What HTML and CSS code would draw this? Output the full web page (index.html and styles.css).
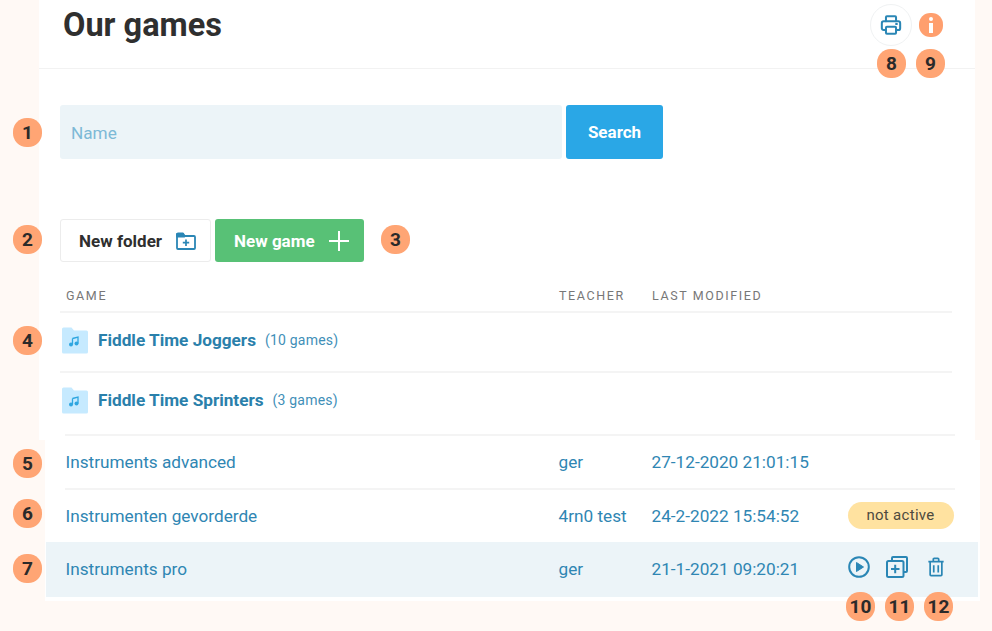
FILE: index.html
```html
<!DOCTYPE html>
<html lang="en">
<head>
<meta charset="utf-8">
<title>Our games</title>
<link rel="stylesheet" href="styles.css">
</head>
<body>
<div class="page">
  <section class="panel">
    <header class="head">
      <h1>Our games</h1>
      <div class="head-actions">
        <button class="print" aria-label="Print">
          <svg width="22" height="22" viewBox="0 0 24 24" fill="none" stroke="#2a86b5" stroke-width="2.200" stroke-linejoin="round" stroke-linecap="round"><path d="M6.500 8V3.500a1 1 0 0 1 1-1h9a1 1 0 0 1 1 1V8"/><path d="M6.500 17.500H4a2 2 0 0 1-2-2V10a2 2 0 0 1 2-2h16a2 2 0 0 1 2 2v5.500a2 2 0 0 1-2 2h-2.500"/><rect x="6.500" y="14" width="11" height="7.500" rx="1"/><path d="M17.500 11h1"/></svg>
        </button>
        <span class="info" aria-label="Info"><i></i><b></b></span>
      </div>
      <span class="tag tag-8">8</span>
      <span class="tag tag-9">9</span>
    </header>

    <form class="search">
      <input type="text" placeholder="Name">
      <button type="button">Search</button>
      <span class="tag tag-1">1</span>
    </form>

    <div class="tools">
      <button class="btn-folder" type="button">New folder
        <svg width="22" height="20" viewBox="0 0 22 20" fill="none" stroke="#2a86b5" stroke-width="1.800" stroke-linejoin="round"><path d="M2 3.500a1 1 0 0 1 1-1h5l1.500 2.500H19a1 1 0 0 1 1 1V17a1 1 0 0 1-1 1H3a1 1 0 0 1-1-1z"/><path d="M2 3h6l1.500 2.500H2z" fill="#2a86b5"/><path d="M11 8.500v6.500M7.800 11.700h6.400" stroke-width="1.700"/></svg>
      </button>
      <button class="btn-game" type="button">New game
        <svg width="22" height="22" viewBox="0 0 22 22" fill="none" stroke="#fff" stroke-width="2"><path d="M11 1v20M1 11h20"/></svg>
      </button>
      <span class="tag tag-2">2</span>
      <span class="tag tag-3">3</span>
    </div>

    <div class="table-head">
      <span>GAME</span><span>TEACHER</span><span>LAST MODIFIED</span>
    </div>

    <div class="folder">
      <svg class="folder-icon" width="28" height="28" viewBox="0 0 28 28"><path d="M1 3a1.500 1.500 0 0 1 1.500-1.500h8L13 4.500h12.500A1.500 1.500 0 0 1 27 6v20a1.500 1.500 0 0 1-1.500 1.500h-23A1.500 1.500 0 0 1 1 26z" fill="#c6eaff"/><path d="M11.500 12.500l5.500-1.500v6.500M11.500 12.500V18.500" fill="none" stroke="#2ea6e0" stroke-width="1.300"/><circle cx="10" cy="18.500" r="2" fill="#2ea6e0"/><circle cx="15.500" cy="17.500" r="2" fill="#2ea6e0"/></svg>
      <a class="folder-name">Fiddle Time Joggers</a><span class="count">(10 games)</span>
      <span class="tag tag-4">4</span>
    </div>
    <div class="folder folder-last">
      <svg class="folder-icon" width="28" height="28" viewBox="0 0 28 28"><path d="M1 3a1.500 1.500 0 0 1 1.500-1.500h8L13 4.500h12.500A1.500 1.500 0 0 1 27 6v20a1.500 1.500 0 0 1-1.500 1.500h-23A1.500 1.500 0 0 1 1 26z" fill="#c6eaff"/><path d="M11.500 12.500l5.500-1.500v6.500M11.500 12.500V18.500" fill="none" stroke="#2ea6e0" stroke-width="1.300"/><circle cx="10" cy="18.500" r="2" fill="#2ea6e0"/><circle cx="15.500" cy="17.500" r="2" fill="#2ea6e0"/></svg>
      <a class="folder-name">Fiddle Time Sprinters</a><span class="count">(3 games)</span>
    </div>
    <div class="divider"></div>
  </section>

  <section class="lower">
    <div class="row row-first">
      <span>Instruments advanced</span><span>ger</span><span>27-12-2020 21:01:15</span><span></span>
      <span class="tag tag-5">5</span>
    </div>
    <div class="row row-plain">
      <span>Instrumenten gevorderde</span><span>4rn0 test</span><span>24-2-2022 15:54:52</span><span class="pill">not active</span>
      <span class="tag tag-6">6</span>
    </div>
    <div class="row row-hover">
      <span>Instruments pro</span><span>ger</span><span>21-1-2021 09:20:21</span>
      <span class="actions">
        <svg width="24" height="24" viewBox="0 0 24 24" fill="none" stroke="#2a86b5" stroke-width="2"><circle cx="12" cy="12" r="9.800"/><path d="M9.500 7.500v9l7-4.500z" fill="#2a86b5" stroke-width="1" stroke-linejoin="round"/></svg>
        <svg width="24" height="24" viewBox="0 0 24 24" fill="none" stroke="#2a86b5" stroke-width="2" stroke-linejoin="round"><path d="M7 5V3a1 1 0 0 1 1-1h13a1 1 0 0 1 1 1v13a1 1 0 0 1-1 1h-2"/><rect x="2" y="6" width="16.500" height="16" rx="1.500"/><path d="M10.200 9.800v8.400M6 14h8.500"/></svg>
        <svg class="trash" width="18" height="20" viewBox="0 0 20 22" fill="none" stroke="#2a86b5" stroke-width="1.900" stroke-linejoin="round"><path d="M1.500 5h17M7 5V2.500a1 1 0 0 1 1-1h4a1 1 0 0 1 1 1V5"/><path d="M3.500 5v14.500a1 1 0 0 0 1 1h11a1 1 0 0 0 1-1V5"/><path d="M7.500 9v8M12.500 9v8"/></svg>
      </span>
      <span class="tag tag-7">7</span>
      <span class="tag tag-10">10</span>
      <span class="tag tag-11">11</span>
      <span class="tag tag-12">12</span>
    </div>
  </section>
</div>
</body>
</html>
```
FILE: styles.css
```css
* { box-sizing: border-box; }
html, body { margin: 0; padding: 0; height: 631px; overflow: hidden; }
body { background: #fff9f5; font-family: Roboto, "Liberation Sans", sans-serif; color: #2f2f2f; }
.page { width: 992px; height: 631px; position: relative; }
button { font-family: inherit; cursor: pointer; }

.panel { margin-left: 39px; width: 936px; height: 440px; background: #fff; padding-left: 21px; padding-right: 23px; }
.head { height: 69px; margin: 0 -23px 0 -21px; padding: 0 33px 0 24px; border-bottom: 1px solid #f2f2f2; display: flex; align-items: flex-start; justify-content: space-between; }
.head h1 { margin: 7px 0 0; font-size: 32.500px; line-height: 36px; font-weight: 700; color: #2f2f2f; }
.head-actions { display: flex; align-items: center; gap: 7px; margin-top: 4px; }
.print { width: 42px; height: 42px; border-radius: 50%; border: 1px solid #f0f2f3; background: #fff; padding: 0; display: flex; align-items: center; justify-content: center; }
.info { width: 24px; height: 24px; border-radius: 47%; background: #ff9f6e; margin-right: -1px; display: flex; flex-direction: column; align-items: center; justify-content: center; gap: 2px; }
.info i { width: 4px; height: 4px; border-radius: 50%; background: #fff; }
.info b { width: 3.500px; height: 10px; background: #fff; }

.search { margin-top: 36px; display: flex; gap: 4px; height: 54px; }
.search input { width: 502px; height: 54px; border: 0; border-radius: 3px; background: #ecf4f8; padding: 1px 11px 0; font: 400 17.200px Roboto, sans-serif; outline: none; }
.search input::placeholder { color: #7db9d6; opacity: 1; }
.search button { width: 97px; border: 0; border-radius: 3px; background: #2aa7e6; color: #fff; font-size: 17px; font-weight: 700; padding: 0; }

.tools { margin-top: 60px; display: flex; gap: 4px; height: 43px; }
.tools button { height: 43px; display: flex; align-items: center; border-radius: 3px; font-size: 17px; font-weight: 700; padding: 0; }
.btn-folder { width: 151px; border: 1px solid #ececec; background: #fff; color: #2f2f2f; justify-content: flex-start; padding-left: 18px !important; gap: 13px; }
.btn-game { width: 149px; border: 0; background: #58c176; color: #fff; padding-left: 19px !important; gap: 13px; }

.table-head { margin-top: 20px; height: 31px; padding-left: 6px; border-bottom: 2px solid #f4f4f4; display: grid; grid-template-columns: 493px 93px 1fr; align-items: start; font-size: 12.500px; letter-spacing: 1.600px; color: #777; line-height: 16px; padding-top: 6px; }

.folder { height: 60px; padding-bottom: 5px; border-bottom: 2px solid #f4f4f4; display: flex; align-items: center; }
.folder-last { border-bottom: 0; height: 61px; padding-bottom: 8px; }
.folder-icon { margin-left: 1px; flex: none; }
.folder-name { margin-left: 9px; font-size: 17.200px; font-weight: 700; color: #2a80ab; }
.count { margin-left: 9px; font-size: 14px; letter-spacing: .2px; color: #3f8fb8; }
.divider { height: 2px; margin: 0 -3px 0 5px; background: #f4f4f4; }

.lower { margin-left: 45px; width: 935px; height: 161px; background: #fff; }
.row { margin: 0 25px 0 20px; display: grid; grid-template-columns: 493px 93px 196px 1fr; align-items: center; padding-left: 0.500px; font-size: 17.200px; color: #2f86b3; }
.row-first { height: 50px; padding-bottom: 4px; border-bottom: 2px solid #f4f4f4; }
.row-plain { height: 52px; }
.row-hover { height: 55px; margin: 0 2px 0 1px; padding-left: 19.500px; padding-bottom: 1px; background: #ecf4f8; }
.pill { justify-self: start; width: 106px; height: 27px; border-radius: 14px; background: #ffe2a0; color: #4e4a3e; font-size: 15px; letter-spacing: .3px; display: flex; align-items: center; justify-content: center; margin-top: -2px; }
.actions { display: flex; align-items: center; margin-top: -5px; margin-left: -1px; gap: 14px; }
.trash { margin-left: 4px; }

.tag { position: absolute; width: 29px; height: 29px; border-radius: 47%; background: #ffa574; color: #2a2a2a; font-size: 19px; font-weight: 700; line-height: 29px; text-align: center; letter-spacing: 0; }
.tag-1 { left: 13px; top: 118px; }
.tag-2 { left: 13px; top: 225px; }
.tag-3 { left: 381px; top: 225px; }
.tag-4 { left: 13px; top: 326px; }
.tag-5 { left: 13px; top: 449px; }
.tag-6 { left: 13px; top: 499px; }
.tag-7 { left: 13px; top: 554px; }
.tag-8 { left: 877px; top: 49px; }
.tag-9 { left: 916px; top: 49px; }
.tag-10 { left: 846px; top: 592px; }
.tag-11 { left: 885px; top: 592px; }
.tag-12 { left: 924px; top: 592px; }
```
